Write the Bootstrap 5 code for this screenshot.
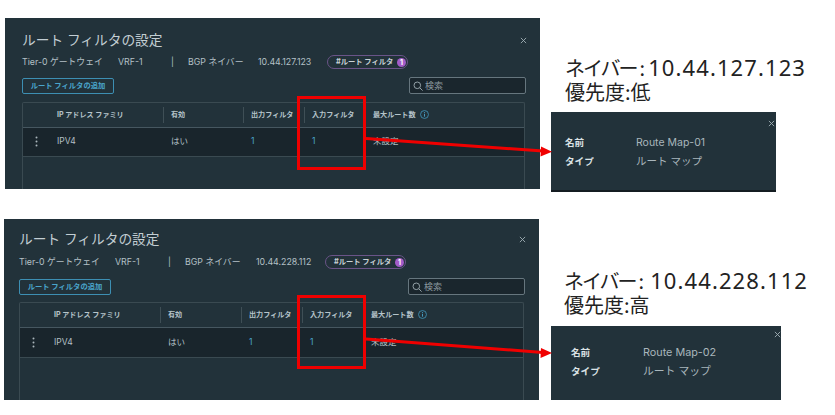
<!DOCTYPE html>
<html lang="ja">
<head>
<meta charset="utf-8">
<title>ルート フィルタの設定</title>
<link rel="stylesheet" href="https://cdn.jsdelivr.net/npm/bootstrap@5.3.0/dist/css/bootstrap.min.css">
<style>
html,body{margin:0;background:#fff;}
body{width:835px;height:415px;overflow:hidden;position:relative;font-family:Inter,"Noto Sans CJK JP",sans-serif;}
.sheet-a{height:219px;padding-top:18px;}
.sheet-b{height:196px;}
.win{width:535px;background:#22323a;color:#b4c0c6;font-size:9px;line-height:1;}
.win-a{margin-left:5px;height:171px;padding:15px 15px 0 17px;}
.win-b{margin-left:4px;height:181px;padding:13px 15px 0 15px;}
.win-title{font-size:13.7px;line-height:14px;color:#c3ced3;font-weight:400;margin:0;}
.x-ico{width:7px;height:7px;stroke:#a4b2b8;stroke-width:1;fill:none;flex:none;}
.win-close{margin-right:-2px;}
.sub-line{margin-top:8px;height:14px;font-size:8.8px;white-space:nowrap;}
.win-b .sub-line{margin-top:9px;}
.s-gw{width:96px;}.s-vrf{width:53px;}.s-bar{width:17px;}.s-bgp{width:70px;}.s-ip{width:69px;}
.win-b .s-bgp{width:71px;}.win-b .s-ip{width:69px;}
.tag-pill{display:inline-flex;align-items:center;justify-content:space-between;width:81px;height:14px;border:1px solid #6a5488;border-radius:7px;padding:0 1px 0 8px;font-size:7.3px;font-weight:700;color:#c9d2d6;}
.tag-num{width:9px;height:9px;border-radius:50%;background:#a35cc9;color:#fff;font-size:7px;line-height:9px;text-align:center;}
.act-line{margin-top:8px;height:17px;}
.win-b .act-line{margin-top:9px;}
.add-btn{--bs-btn-padding-x:0;--bs-btn-padding-y:0;width:92px;height:16px;font-size:7.3px;font-weight:700;line-height:14px;color:#4aa5cc;border:1px solid #3d8fb3;border-radius:2px;background:transparent;}
.find-box{width:117px;height:17px;border:1px solid #66767e;border-radius:2px;background:#1a262d;padding:0 3px;color:#8b999f;font-size:9px;margin-right:-1px;gap:2px;}
.find-box svg{width:10px;height:10px;stroke:#93a1a7;fill:none;stroke-width:1;}
.tbl-wrap{margin-top:8px;height:87px;border:1px solid #3a4a51;border-bottom:0;border-radius:2px 2px 0 0;}
.win-b .tbl-wrap{height:98px;margin-top:7px;}
.rt-tbl{width:100%;table-layout:fixed;border-collapse:collapse;margin:0;}
.rt-tbl th{height:24px;padding:0 0 0 8px;font-size:7.1px;font-weight:700;color:#b6c4ca;position:relative;border-bottom:1px solid #465760;white-space:nowrap;vertical-align:middle;}
.rt-tbl th.has-sep::before{content:"";position:absolute;left:0;top:4px;bottom:4px;width:1px;background:#3f4f56;}
.rt-tbl td{height:29px;padding:0 0 0 8px;background:#19252c;color:#b4c0c6;font-size:8.5px;border-bottom:1px solid #3a4a51;white-space:nowrap;vertical-align:middle;}
.win-b .rt-tbl td{height:30px;}
.rt-tbl td.dot-cell{padding:0 0 0 12px;}
.rt-tbl td.link-num{color:#4aa5cc;}
.dots{width:3px;height:11px;fill:#aab6bb;display:block;}
.info-ico{width:9px;height:9px;display:inline-block;vertical-align:-2px;margin-left:4px;}
.side{margin-left:11px;}
.side-a{padding-top:37px;width:279px;}
.side-b{padding-top:49px;width:280px;margin-left:12px;}
.note{font-family:"Noto Sans CJK JP","Noto Sans",sans-serif;color:#222;font-size:20px;line-height:24px;white-space:nowrap;margin-left:14px;}
.side-b .note{margin-left:13px;}
.note-kana{letter-spacing:-2px;margin-right:3px;}
.note-num{font-family:"Noto Sans",sans-serif;font-size:22px;letter-spacing:1.1px;margin-left:3px;}
.side-b .note-num{margin-left:6px;}
.pop{background:#22323a;font-size:10.5px;line-height:1;position:relative;color:#a9b6bc;}
.pop-a{width:225px;height:80px;margin-top:8px;padding:26px 0 0 14px;border-bottom:2px solid #141c21;}
.pop-b{width:230px;height:74px;margin-top:9px;padding:22px 0 0 20px;font-size:10.8px;}
.pop-close{position:absolute;right:1px;top:8px;}
.pop-b .pop-close{right:0;top:5px;}
.pop-row{display:flex;height:19px;align-items:flex-start;}
.pop-k{font-weight:700;color:#dbe2e5;font-size:9.6px;width:71px;}
.pop-b .pop-k{width:72px;}
.annot{position:absolute;left:0;top:0;pointer-events:none;}
</style>
</head>
<body>

<div class="sheet-a d-flex align-items-start">
  <section class="win win-a">
    <div class="d-flex justify-content-between align-items-center">
      <h1 class="win-title">ルート フィルタの設定</h1>
      <svg class="x-ico win-close" viewBox="0 0 8 8"><path d="M1 1l6 6M7 1l-6 6"/></svg>
    </div>
    <div class="sub-line d-flex align-items-center">
      <span class="s-gw">Tier-0 ゲートウェイ</span><span class="s-vrf">VRF-1</span><span class="s-bar">|</span><span class="s-bgp">BGP ネイバー</span><span class="s-ip">10.44.127.123</span>
      <span class="tag-pill"><span>#ルート フィルタ</span><span class="tag-num">1</span></span>
    </div>
    <div class="act-line d-flex justify-content-between align-items-center">
      <button type="button" class="btn add-btn">ルート フィルタの追加</button>
      <div class="find-box d-flex align-items-center">
        <svg viewBox="0 0 10 10"><circle cx="4.3" cy="4.3" r="3.3"/><path d="M6.8 6.8L9.6 9.6"/></svg><span>検索</span>
      </div>
    </div>
    <div class="tbl-wrap">
      <table class="rt-tbl">
        <colgroup><col style="width:26px"><col style="width:114px"><col style="width:80px"><col style="width:61px"><col style="width:61px"><col></colgroup>
        <thead><tr><th></th><th>IP アドレス ファミリ</th><th class="has-sep">有効</th><th class="has-sep">出力フィルタ</th><th class="has-sep">入力フィルタ</th><th>最大ルート数<svg class="info-ico" viewBox="0 0 10 10"><circle cx="5" cy="5" r="4.4" fill="none" stroke="#3f8db0"/><path d="M5 4.2v3.2M5 2.4v1" stroke="#4aa5cc" fill="none"/></svg></th></tr></thead>
        <tbody><tr><td class="dot-cell"><svg class="dots" viewBox="0 0 3 11"><circle cx="1.5" cy="1.5" r="1"/><circle cx="1.5" cy="5.5" r="1"/><circle cx="1.5" cy="9.5" r="1"/></svg></td><td>IPV4</td><td>はい</td><td class="link-num">1</td><td class="link-num">1</td><td>未設定</td></tr></tbody>
      </table>
    </div>
  </section>
  <aside class="side side-a">
    <div class="note"><span class="note-kana">ネイバー</span>:<span class="note-num">10.44.127.123</span><br>優先度:低</div>
    <div class="pop pop-a">
      <svg class="x-ico pop-close" viewBox="0 0 8 8"><path d="M1 1l6 6M7 1l-6 6"/></svg>
      <div class="pop-row"><span class="pop-k">名前</span><span>Route Map-01</span></div>
      <div class="pop-row"><span class="pop-k">タイプ</span><span>ルート マップ</span></div>
    </div>
  </aside>
</div>

<div class="sheet-b d-flex align-items-start">
  <section class="win win-b">
    <div class="d-flex justify-content-between align-items-center">
      <h1 class="win-title">ルート フィルタの設定</h1>
      <svg class="x-ico win-close" viewBox="0 0 8 8"><path d="M1 1l6 6M7 1l-6 6"/></svg>
    </div>
    <div class="sub-line d-flex align-items-center">
      <span class="s-gw">Tier-0 ゲートウェイ</span><span class="s-vrf">VRF-1</span><span class="s-bar">|</span><span class="s-bgp">BGP ネイバー</span><span class="s-ip">10.44.228.112</span>
      <span class="tag-pill"><span>#ルート フィルタ</span><span class="tag-num">1</span></span>
    </div>
    <div class="act-line d-flex justify-content-between align-items-center">
      <button type="button" class="btn add-btn">ルート フィルタの追加</button>
      <div class="find-box d-flex align-items-center">
        <svg viewBox="0 0 10 10"><circle cx="4.3" cy="4.3" r="3.3"/><path d="M6.8 6.8L9.6 9.6"/></svg><span>検索</span>
      </div>
    </div>
    <div class="tbl-wrap">
      <table class="rt-tbl">
        <colgroup><col style="width:26px"><col style="width:114px"><col style="width:81px"><col style="width:61px"><col style="width:61px"><col></colgroup>
        <thead><tr><th></th><th>IP アドレス ファミリ</th><th class="has-sep">有効</th><th class="has-sep">出力フィルタ</th><th class="has-sep">入力フィルタ</th><th>最大ルート数<svg class="info-ico" viewBox="0 0 10 10"><circle cx="5" cy="5" r="4.4" fill="none" stroke="#3f8db0"/><path d="M5 4.2v3.2M5 2.4v1" stroke="#4aa5cc" fill="none"/></svg></th></tr></thead>
        <tbody><tr><td class="dot-cell"><svg class="dots" viewBox="0 0 3 11"><circle cx="1.5" cy="1.5" r="1"/><circle cx="1.5" cy="5.5" r="1"/><circle cx="1.5" cy="9.5" r="1"/></svg></td><td>IPV4</td><td>はい</td><td class="link-num">1</td><td class="link-num">1</td><td>未設定</td></tr></tbody>
      </table>
    </div>
  </section>
  <aside class="side side-b">
    <div class="note"><span class="note-kana">ネイバー</span>:<span class="note-num">10.44.228.112</span><br>優先度:高</div>
    <div class="pop pop-b">
      <svg class="x-ico pop-close" viewBox="0 0 8 8"><path d="M1 1l6 6M7 1l-6 6"/></svg>
      <div class="pop-row"><span class="pop-k">名前</span><span>Route Map-02</span></div>
      <div class="pop-row"><span class="pop-k">タイプ</span><span>ルート マップ</span></div>
    </div>
  </aside>
</div>

<svg class="annot" width="835" height="415" viewBox="0 0 835 415" aria-hidden="true">
  <g fill="none" stroke="#f00000" stroke-width="3">
    <rect x="298.5" y="97.5" width="66" height="71"/>
    <rect x="298.5" y="296.5" width="66" height="71"/>
    <path d="M366 138.500L543 151M366 339L543 352.500"/>
  </g>
  <g fill="#f00000">
    <path d="M552 151.800L541 146.500L540.500 156.500Z"/>
    <path d="M552 353L541 348L540.500 358Z"/>
  </g>
</svg>

<script src="https://cdn.jsdelivr.net/npm/bootstrap@5.3.0/dist/js/bootstrap.bundle.min.js"></script>
</body>
</html>
